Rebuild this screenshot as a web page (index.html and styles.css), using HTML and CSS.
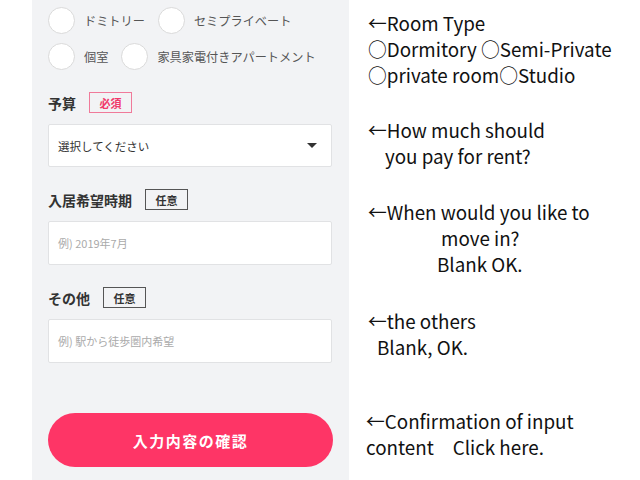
FILE: index.html
```html
<!DOCTYPE html>
<html lang="ja">
<head>
<meta charset="utf-8">
<title>Form</title>
<link rel="stylesheet" href="styles.css">
</head>
<body>
<div class="page">
  <div class="panel">
    <div class="radios">
      <div class="radio-row">
        <span class="radio"><span class="circle"></span><span class="radio-text">ドミトリー</span></span>
        <span class="radio"><span class="circle"></span><span class="radio-text">セミプライベート</span></span>
      </div>
      <div class="radio-row">
        <span class="radio"><span class="circle"></span><span class="radio-text">個室</span></span>
        <span class="radio"><span class="circle"></span><span class="radio-text">家具家電付きアパートメント</span></span>
      </div>
    </div>

    <div class="field">
      <div class="label-row"><span class="label">予算</span><span class="badge badge-req">必須</span></div>
      <div class="control select"><span class="select-text">選択してください</span><span class="caret"></span></div>
    </div>

    <div class="field">
      <div class="label-row"><span class="label">入居希望時期</span><span class="badge badge-opt">任意</span></div>
      <div class="control"><span class="placeholder">例) 2019年7月</span></div>
    </div>

    <div class="field">
      <div class="label-row"><span class="label">その他</span><span class="badge badge-opt">任意</span></div>
      <div class="control"><span class="placeholder">例) 駅から徒歩圏内希望</span></div>
    </div>

    <div class="button">入力内容の確認</div>
  </div>

  <div class="notes">
    <div class="note note-1">
      <div>←Room Type</div>
      <div>○Dormitory ○Semi-Private</div>
      <div>○private room○Studio</div>
    </div>
    <div class="note note-2">
      <div>←How much should</div>
      <div class="ind-2">you pay for rent?</div>
    </div>
    <div class="note note-3">
      <div>←When would you like to</div>
      <div class="ind-3a">move in?</div>
      <div class="ind-3b">Blank OK.</div>
    </div>
    <div class="note note-4">
      <div>←the others</div>
      <div class="ind-4">Blank, OK.</div>
    </div>
    <div class="note note-5">
      <div>←Confirmation of input</div>
      <div>content<span class="gap"></span>Click here.</div>
    </div>
  </div>
</div>
</body>
</html>
```

FILE: styles.css
```css
* { box-sizing: border-box; }
html, body {
  margin: 0;
  padding: 0;
  background: #ffffff;
  width: 640px;
  height: 480px;
  overflow: hidden;
  font-family: "Noto Sans CJK JP", "Noto Sans", sans-serif;
}
.page {
  display: flex;
  height: 480px;
}
.panel {
  margin-left: 32px;
  width: 317px;
  height: 480px;
  background: #f2f3f5;
  padding: 7px 16px 0 16px;
}
.radios {
  display: flex;
  flex-direction: column;
  gap: 9px;
}
.radio-row {
  display: flex;
  align-items: center;
  gap: 13px;
  height: 27px;
}
.radio {
  display: flex;
  align-items: center;
  gap: 9px;
}
.circle {
  width: 27px;
  height: 27px;
  border-radius: 50%;
  background: #fff;
  border: 1px solid #dadada;
  flex: none;
}
.radio-text {
  font-size: 12.2px;
  color: #555;
}
.field {
  margin-top: 22px;
}
.label-row {
  display: flex;
  align-items: center;
  gap: 13px;
  height: 21px;
}
.label {
  font-size: 14px;
  font-weight: bold;
  color: #333;
}
.badge {
  height: 21px;
  width: 43px;
  display: flex;
  align-items: center;
  justify-content: center;
  font-size: 11px;
  border: 1px solid;
}
.badge-req {
  color: #f0396b;
  border-color: #f07a9a;
  font-weight: bold;
}
.badge-opt {
  color: #333;
  border-color: #555;
  font-weight: bold;
}
.control {
  margin-top: 11px;
  height: 44px;
  width: 284px;
  background: #fff;
  border: 1px solid #e1e2e4;
  border-radius: 2px;
  display: flex;
  align-items: center;
  padding: 0 14px 0 9px;
}
.select {
  height: 43px;
  justify-content: space-between;
}
.select-text {
  font-size: 11.5px;
  color: #333;
}
.caret {
  width: 0;
  height: 0;
  border-left: 5px solid transparent;
  border-right: 5px solid transparent;
  border-top: 5px solid #333;
}
.placeholder {
  font-size: 11px;
  color: #aaa;
}
.button {
  margin-top: 50px;
  height: 54px;
  width: 285px;
  border-radius: 27px;
  background: #fe3566;
  color: #fff;
  font-size: 15px;
  font-weight: bold;
  letter-spacing: 1.5px;
  display: flex;
  align-items: center;
  justify-content: center;
}
.notes {
  margin-left: 19px;
  font-size: 18.8px;
  line-height: 26px;
  color: #111;
}
.note-1 { margin-top: 10px; }
.note-2 { margin-top: 29px; }
.note-3 { margin-top: 30px; }
.note-4 { margin-top: 31px; }
.note-5 { margin-top: 48px; margin-left: -2px; }
.ind-2 { padding-left: 17px; }
.ind-3a { padding-left: 73px; }
.ind-3b { padding-left: 69px; }
.ind-4 { padding-left: 9px; }
.gap { display: inline-block; width: 19px; }
```
